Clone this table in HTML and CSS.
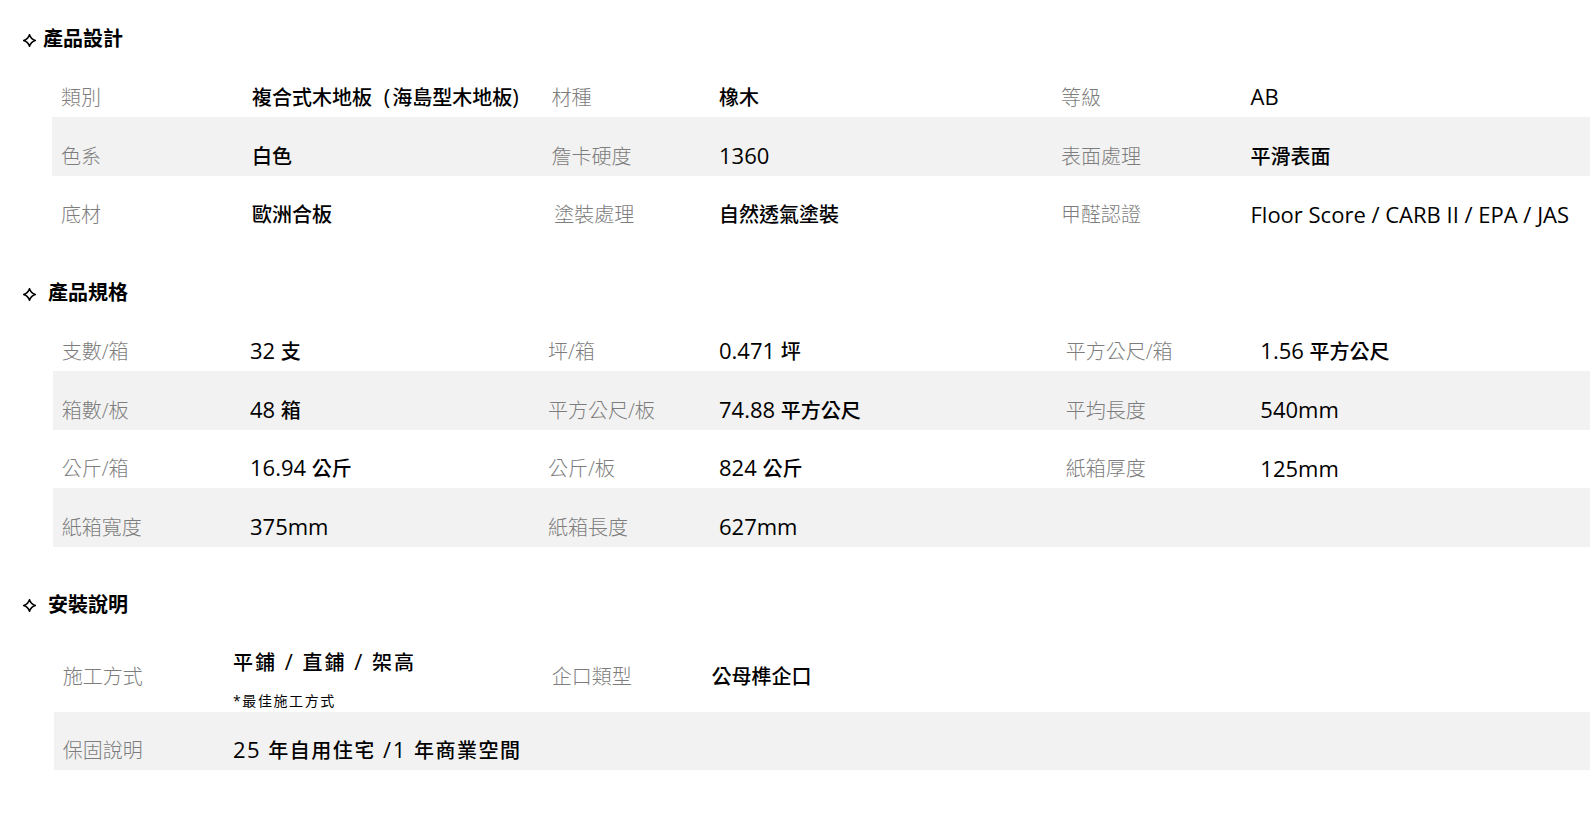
FILE: index.html
```html
<!DOCTYPE html>
<html lang="zh-Hant">
<head>
<meta charset="utf-8">
<title>產品規格</title>
<link rel="stylesheet" href="styles.css">
</head>
<body>
<main class="page">
  <section class="spec">
    <h2 class="spec-title">
      <svg class="star" viewBox="0 0 13 13" aria-hidden="true"><path d="M6.5 0.7 Q7.9 5.1 12.3 6.5 Q7.9 7.9 6.5 12.3 Q5.1 7.9 0.7 6.5 Q5.1 5.1 6.5 0.7Z"/></svg>產品設計
    </h2>
    <div class="spec-table t-design">
      <div class="spec-row">
        <span class="lbl">類別</span><span class="val">複合式木地板<span class="lat paren-open"> (</span>海島型木地板<span class="lat">)</span></span>
        <span class="lbl">材種</span><span class="val">橡木</span>
        <span class="lbl">等級</span><span class="val lat">AB</span>
      </div>
      <div class="spec-row">
        <span class="lbl">色系</span><span class="val">白色</span>
        <span class="lbl">詹卡硬度</span><span class="val lat">1360</span>
        <span class="lbl">表面處理</span><span class="val">平滑表面</span>
      </div>
      <div class="spec-row">
        <span class="lbl">底材</span><span class="val">歐洲合板</span>
        <span class="lbl lbl-shift">塗裝處理</span><span class="val">自然透氣塗裝</span>
        <span class="lbl">甲醛認證</span><span class="val lat">Floor Score / CARB II / EPA / JAS</span>
      </div>
    </div>
  </section>

  <section class="spec">
    <h2 class="spec-title spaced">
      <svg class="star" viewBox="0 0 13 13" aria-hidden="true"><path d="M6.5 0.7 Q7.9 5.1 12.3 6.5 Q7.9 7.9 6.5 12.3 Q5.1 7.9 0.7 6.5 Q5.1 5.1 6.5 0.7Z"/></svg>產品規格
    </h2>
    <div class="spec-table t-size">
      <div class="spec-row">
        <span class="lbl">支數/箱</span><span class="val"><span class="lat">32 </span>支</span>
        <span class="lbl">坪/箱</span><span class="val"><span class="lat">0.471 </span>坪</span>
        <span class="lbl">平方公尺/箱</span><span class="val"><span class="lat">1.56 </span>平方公尺</span>
      </div>
      <div class="spec-row">
        <span class="lbl">箱數/板</span><span class="val"><span class="lat">48 </span>箱</span>
        <span class="lbl">平方公尺/板</span><span class="val"><span class="lat">74.88 </span>平方公尺</span>
        <span class="lbl">平均長度</span><span class="val lat">540mm</span>
      </div>
      <div class="spec-row">
        <span class="lbl">公斤/箱</span><span class="val"><span class="lat">16.94 </span>公斤</span>
        <span class="lbl">公斤/板</span><span class="val"><span class="lat">824 </span>公斤</span>
        <span class="lbl">紙箱厚度</span><span class="val lat">125mm</span>
      </div>
      <div class="spec-row">
        <span class="lbl">紙箱寬度</span><span class="val lat">375mm</span>
        <span class="lbl">紙箱長度</span><span class="val lat">627mm</span>
      </div>
    </div>
  </section>

  <section class="spec spec-last">
    <h2 class="spec-title spaced">
      <svg class="star" viewBox="0 0 13 13" aria-hidden="true"><path d="M6.5 0.7 Q7.9 5.1 12.3 6.5 Q7.9 7.9 6.5 12.3 Q5.1 7.9 0.7 6.5 Q5.1 5.1 6.5 0.7Z"/></svg>安裝說明
    </h2>
    <div class="spec-table t-install">
      <div class="spec-row row-tall">
        <span class="lbl lbl-up">施工方式</span>
        <div class="val val-stack">
          <span class="val-main">平鋪<span class="lat"> / </span>直鋪<span class="lat"> / </span>架高</span>
          <span class="val-note">*最佳施工方式</span>
        </div>
        <span class="lbl lbl-up">企口類型</span><span class="val lbl-up">公母榫企口</span>
      </div>
      <div class="spec-row">
        <span class="lbl">保固說明</span><span class="val val-wide"><span class="lat">25 </span>年自用住宅<span class="lat"> /1 </span>年商業空間</span>
      </div>
    </div>
  </section>
</main>
</body>
</html>
```

FILE: styles.css
```css
html, body {
  margin: 0;
  padding: 0;
  background: #ffffff;
}

body {
  font-family: "Open Sans", "Noto Sans CJK TC", sans-serif;
  color: #000000;
  width: 1590px;
  overflow: hidden;
}

.page {
  padding-top: 19.3px;
}

.spec + .spec {
  margin-top: 39px;
}

.spec + .spec-last {
  margin-top: 38px;
}

.spec-title {
  margin: 0;
  height: 38px;
  box-sizing: border-box;
  padding-top: 1px;
  line-height: 37px;
  padding-left: 22.5px;
  font-size: 20px;
  font-weight: 700;
  display: flex;
  align-items: center;
  color: #000;
}

.star {
  width: 13px;
  height: 13px;
  margin-right: 7.5px;
  margin-top: 3px;
  flex: none;
}

.star path {
  fill: none;
  stroke: #000;
  stroke-width: 1.5;
  stroke-linejoin: miter;
}

.spaced .star {
  margin-right: 12.5px;
}

.spec-table {
  margin-top: 1px;
}

.spec-row {
  display: grid;
  align-items: end;
  height: 58.67px;
  box-sizing: border-box;
  padding-bottom: 4px;
  font-size: 20px;
  line-height: 30px;
}

.spec-row:nth-child(even) {
  background: #f2f2f2;
}

.t-design {
  margin-left: 51.7px;
}
.t-design .spec-row {
  padding-left: 9.3px;
  grid-template-columns: 191px 299.6px 167.4px 342px 189.5px 1fr;
}

.t-size {
  margin-left: 52.7px;
}
.t-size .spec-row {
  padding-left: 9px;
  grid-template-columns: 188.3px 298px 171px 346.7px 194.7px 1fr;
}

.t-install {
  margin-left: 54px;
}
.t-install .spec-row {
  padding-left: 8.7px;
  grid-template-columns: 170.3px 318.7px 159.8px 1fr;
}

.lbl {
  color: #7d7d7d;
  font-weight: 300;
  white-space: nowrap;
}

.lbl-shift {
  padding-left: 2.7px;
}

.val {
  color: #000;
  font-weight: 500;
  white-space: nowrap;
}

.lat {
  font-size: 22px;
  font-weight: 400;
}

.paren-open {
  padding-left: 6px;
  padding-right: 2px;
}

.val.lat {
  margin-bottom: 1.5px;
}

.row-tall {
  height: auto;
  padding-top: 21.7px;
  padding-bottom: 2px;
  align-items: center;
}

.lbl-up {
  margin-bottom: 2px;
}

.val-stack {
  display: flex;
  flex-direction: column;
}

.val-main {
  line-height: 30px;
  letter-spacing: 2px;
}

.val-note {
  margin-top: 14px;
  font-size: 14px;
  line-height: 18px;
  letter-spacing: 1.6px;
  font-weight: 400;
  color: #000;
}

.val-wide {
  letter-spacing: 1.5px;
}
```
